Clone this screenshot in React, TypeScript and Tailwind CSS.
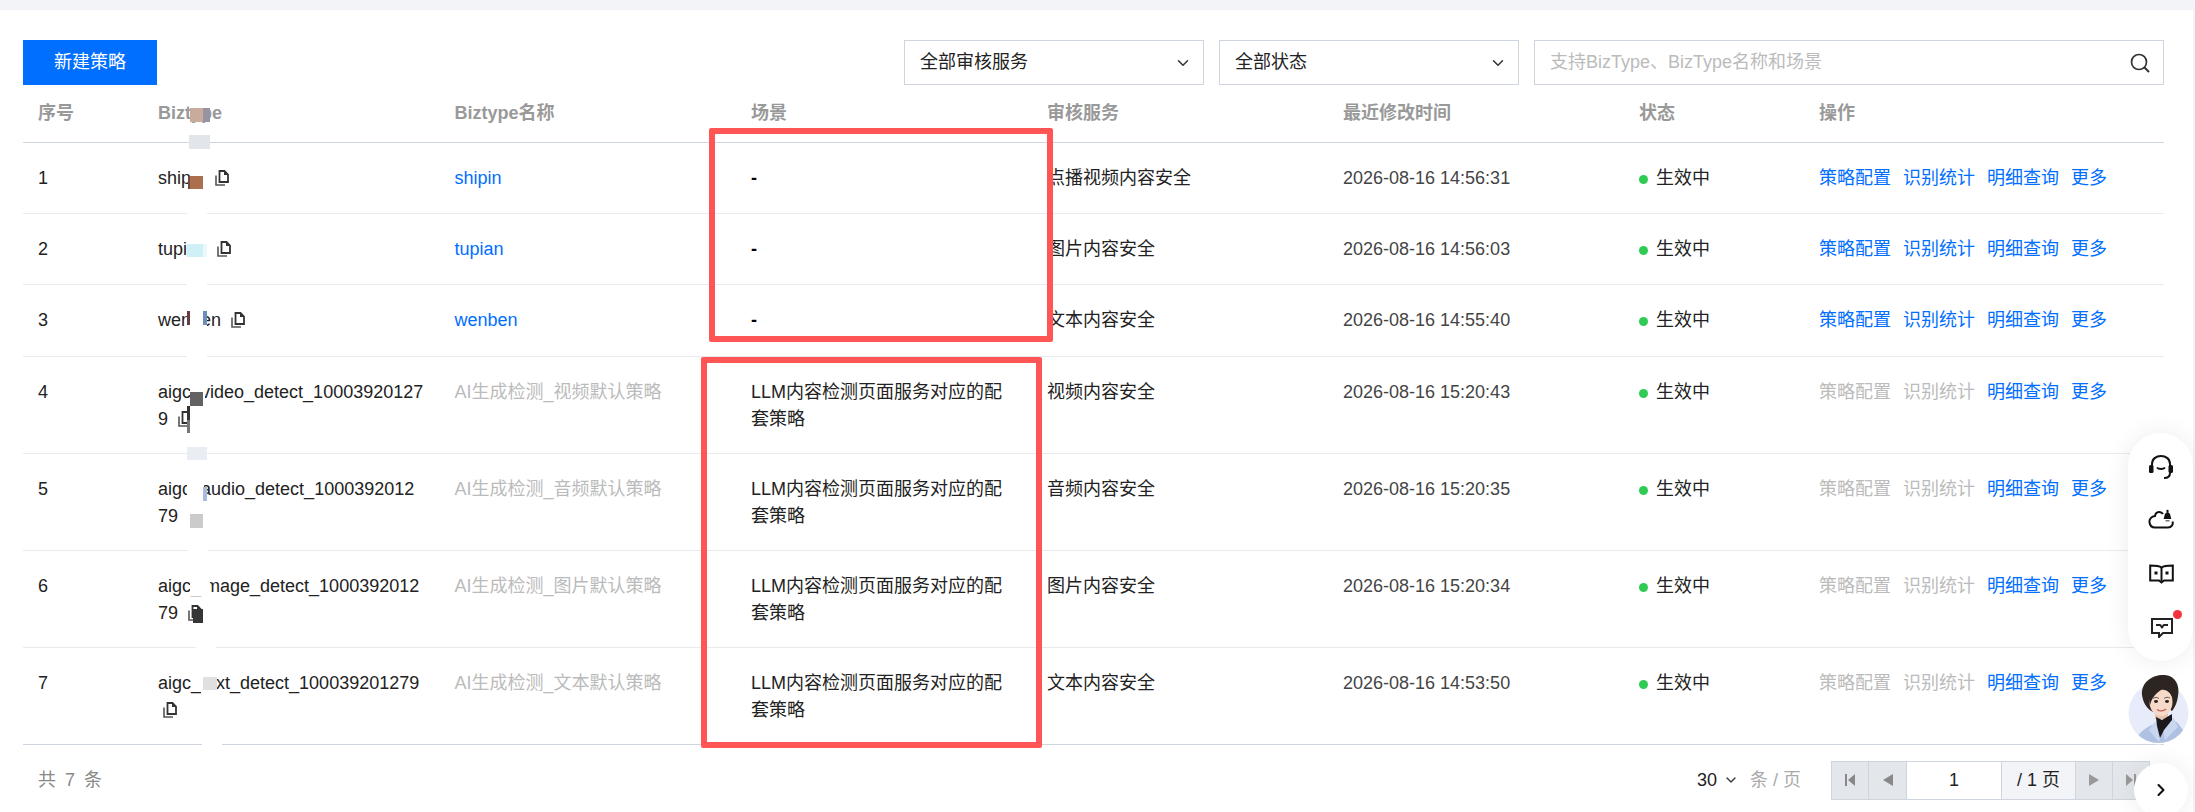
import { ChevronDown, ChevronRight } from "lucide-react"

interface Row {
  id: number
  biztype: string
  name: string
  scene: string
  service: string
  time: string
  locked: boolean
}

const rows: Row[] = [
  { id: 1, biztype: "shipin", name: "shipin", scene: "-", service: "点播视频内容安全", time: "2026-08-16 14:56:31", locked: false },
  { id: 2, biztype: "tupian", name: "tupian", scene: "-", service: "图片内容安全", time: "2026-08-16 14:56:03", locked: false },
  { id: 3, biztype: "wenben", name: "wenben", scene: "-", service: "文本内容安全", time: "2026-08-16 14:55:40", locked: false },
  { id: 4, biztype: "aigc_video_detect_100039201279", name: "AI生成检测_视频默认策略", scene: "LLM内容检测页面服务对应的配套策略", service: "视频内容安全", time: "2026-08-16 15:20:43", locked: true },
  { id: 5, biztype: "aigc_audio_detect_100039201279", name: "AI生成检测_音频默认策略", scene: "LLM内容检测页面服务对应的配套策略", service: "音频内容安全", time: "2026-08-16 15:20:35", locked: true },
  { id: 6, biztype: "aigc_image_detect_100039201279", name: "AI生成检测_图片默认策略", scene: "LLM内容检测页面服务对应的配套策略", service: "图片内容安全", time: "2026-08-16 15:20:34", locked: true },
  { id: 7, biztype: "aigc_text_detect_100039201279", name: "AI生成检测_文本默认策略", scene: "LLM内容检测页面服务对应的配套策略", service: "文本内容安全", time: "2026-08-16 14:53:50", locked: true },
]

const columns = [
  { label: "序号", width: "w-[120px]" },
  { label: "Biztype", width: "w-[296.5px]" },
  { label: "Biztype名称", width: "w-[296.5px]" },
  { label: "场景", width: "w-[296px]" },
  { label: "审核服务", width: "w-[296px]" },
  { label: "最近修改时间", width: "w-[296px]" },
  { label: "状态", width: "w-[180px]" },
  { label: "操作", width: "w-[360px]" },
]

const patches = [
  "left-[190px] top-[108px] w-[13px] h-[14px] bg-[#c9ab9b]",
  "left-[203px] top-[108px] w-[7px] h-[14px] bg-[#9793a0]",
  "left-[189px] top-[135px] w-[21px] h-[14px] bg-[#e2e5ea]",
  "left-[190px] top-[165px] w-[17px] h-[25px] bg-white",
  "left-[188px] top-[176px] w-[2px] h-[13px] bg-[#6f4a42]",
  "left-[190px] top-[176px] w-[13px] h-[13px] bg-[#ab6f4e]",
  "left-[187px] top-[210px] w-[20px] h-[6px] bg-white",
  "left-[187px] top-[235px] w-[20px] h-[26px] bg-white",
  "left-[187px] top-[244px] w-[16px] h-[13px] bg-[#cff0f6]",
  "left-[203px] top-[244px] w-[4px] h-[13px] bg-[#e8f8fb]",
  "left-[187px] top-[281px] w-[20px] h-[6px] bg-white",
  "left-[187px] top-[305px] w-[20px] h-[26px] bg-white",
  "left-[187px] top-[311px] w-[3px] h-[14px] bg-[#663b42]",
  "left-[203px] top-[311px] w-[4px] h-[14px] bg-[#6a8fbb]",
  "left-[187px] top-[353px] w-[20px] h-[6px] bg-white",
  "left-[190px] top-[378px] w-[15px] h-[28px] bg-white",
  "left-[190px] top-[392px] w-[13px] h-[14px] bg-[#626262]",
  "left-[190px] top-[406px] w-[14px] h-[27px] bg-white",
  "left-[187px] top-[406px] w-[3px] h-[14px] bg-[#333333]",
  "left-[187px] top-[420px] w-[3px] h-[13px] bg-[#777777]",
  "left-[187px] top-[447px] w-[20px] h-[13px] bg-[#ebedf4]",
  "left-[187px] top-[475px] w-[17px] h-[28px] bg-white",
  "left-[203px] top-[487px] w-[4px] h-[14px] bg-[#a8bcdc]",
  "left-[183px] top-[505px] w-[24px] h-[30px] bg-white",
  "left-[190px] top-[514px] w-[13px] h-[14px] bg-[#cbcbcb]",
  "left-[188px] top-[547px] w-[20px] h-[6px] bg-white",
  "left-[190px] top-[572px] w-[20px] h-[24px] bg-white",
  "left-[193px] top-[609px] w-[10px] h-[14px] bg-[#363636]",
  "left-[196px] top-[644px] w-[20px] h-[6px] bg-white",
  "left-[201px] top-[668px] w-[16px] h-[26px] bg-white",
  "left-[203px] top-[677px] w-[14px] h-[13px] bg-[#e0e0e0]",
  "left-[202px] top-[741px] w-[20px] h-[6px] bg-white",
]

function CopyIcon() {
  return (
    <svg viewBox="0 0 14 16" className="inline-block ml-[5px] w-[14px] h-[16px] align-[-2px]">
      <path d="M1 5.5V15h9" fill="none" stroke="#555" strokeWidth="1.6" />
      <path d="M4.5 1H9.5L13 4.5V12H4.5Z" fill="#fff" stroke="#333" strokeWidth="1.8" />
      <path d="M9 1V5H13Z" fill="#333" />
    </svg>
  )
}

function HeadsetIcon() {
  return (
    <svg viewBox="0 0 26 26" className="w-[26px] h-[26px]">
      <path d="M4 12V10C4 5 8 2 13 2S22 5 22 10V12" fill="none" stroke="#111" strokeWidth="2" />
      <rect x="1" y="11" width="4.5" height="8" rx="1.5" fill="#111" />
      <rect x="20.5" y="11" width="4.5" height="8" rx="1.5" fill="#111" />
      <path d="M9 13.5C10.5 15.5 15.5 15.5 17 13.5" fill="none" stroke="#111" strokeWidth="2" />
      <path d="M22 19C22 22.5 20 24 16 24" fill="none" stroke="#111" strokeWidth="2" />
    </svg>
  )
}

function CloudBellIcon() {
  return (
    <svg viewBox="0 0 26 20" className="w-[26px] h-[20px]">
      <path d="M15 5C13.5 2.5 8 1.5 7 7C3.5 7.5 1 10 1.5 13.5C2 17 4.5 18.5 7 18.5H20C23.5 18.5 25.5 15.5 24.5 12.5" fill="none" stroke="#111" strokeWidth="2" />
      <path d="M15.5 10C16.5 9 16 3.5 19.5 3C23 3.5 22.5 9 23.5 10Z" fill="#111" />
      <circle cx="19.5" cy="2" r="1.2" fill="#111" />
      <rect x="17.5" y="11" width="4" height="1.5" fill="#777" />
    </svg>
  )
}

function BookIcon() {
  return (
    <svg viewBox="0 0 25 20" className="w-[25px] h-[20px]">
      <path d="M12.5 3.5C10 1.5 5 1.5 1.2 1.5V16.5H10L12.5 18.5L15 16.5H23.8V1.5C20 1.5 15 1.5 12.5 3.5Z" fill="none" stroke="#111" strokeWidth="2" />
      <path d="M12.5 3.5V17" stroke="#111" strokeWidth="2" />
      <rect x="5.5" y="7.5" width="3" height="3" fill="#111" />
      <rect x="16.5" y="7.5" width="3" height="3" fill="#111" />
    </svg>
  )
}

function MessageIcon() {
  return (
    <svg viewBox="0 0 22 20" className="w-[22px] h-[20px]">
      <path d="M1 1H21V15H12L8 19V15H1Z" fill="none" stroke="#222" strokeWidth="2" />
      <path d="M5 7H9C10 7 10.5 9.5 11 9.5S12 7 13 7H17" fill="none" stroke="#222" strokeWidth="2" />
    </svg>
  )
}

function Avatar() {
  return (
    <svg viewBox="0 0 70 80" className="w-[70px] h-[80px]">
      <defs>
        <clipPath id="avatarClip">
          <circle cx="33.5" cy="43" r="30" />
        </clipPath>
      </defs>
      <circle cx="33.5" cy="43" r="31.5" fill="#fff" />
      <circle cx="33.5" cy="43" r="30" fill="#e8ebf9" />
      <g clipPath="url(#avatarClip)">
        <path d="M8 76C12 62 22 57 31 53L47 49C54 53 60 60 64 76Z" fill="#aec1e3" />
        <path d="M30 52L24 60L34 72L38 60Z" fill="#c9d6ef" />
        <path d="M48 47L53 57L40 70L38 60Z" fill="#c9d6ef" />
      </g>
      <path d="M17 25C16 11 29 4 40 5C51 6 55 16 53 26C52 33 50 37 47 41L40 36L28 42C21 38 18 32 17 25Z" fill="#2d2521" />
      <path d="M30 40H43V49H30Z" fill="#eac3ae" />
      <path d="M31 47L37 50L47 44L47 50L39 60L35 68L32 56Z" fill="#1b191b" />
      <ellipse cx="36" cy="32" rx="11.5" ry="14" fill="#f5d9c9" />
      <path d="M24 29C25 19 35 13 44 14C47 18 49 22 48 28C45 22 41 19 36 20C32 23 28 25 25 35Z" fill="#2d2521" />
      <path d="M28 28.5C30 27 32 27 34 28.5" fill="none" stroke="#4a3a34" strokeWidth="0.8" />
      <path d="M39 28.5C41 27 43 27 45 28" fill="none" stroke="#4a3a34" strokeWidth="0.8" />
      <ellipse cx="31" cy="31.5" rx="2" ry="1.4" fill="#2c2220" />
      <ellipse cx="42" cy="31.5" rx="2" ry="1.4" fill="#2c2220" />
      <path d="M32 39.5C34.5 41.5 38.5 41.5 41 39" fill="none" stroke="#c4605c" strokeWidth="1.3" />
    </svg>
  )
}

function Status() {
  return (
    <span className="flex items-center">
      <span className="w-[9px] h-[9px] rounded-full bg-[#2fcb55] mr-[8px] mt-[2px]" />
      生效中
    </span>
  )
}

function Actions({ locked }: { locked: boolean }) {
  const muted = locked ? "text-[#bbbbbb]" : "text-[#006eff]"
  return (
    <div className="flex gap-[12px] text-[#006eff]">
      <a className={muted}>策略配置</a>
      <a className={muted}>识别统计</a>
      <a>明细查询</a>
      <a>更多</a>
    </div>
  )
}

export default function App() {
  return (
    <div className="relative w-full h-[812px] overflow-hidden bg-[#f3f4f8] text-[18px] leading-[27px] text-[#222222] font-['Liberation_Sans','Noto_Sans_CJK_SC',sans-serif]">
      <div className="mr-[2px] mt-[10px] h-[802px] bg-white pl-[23px] pr-[29px] pt-[30px]">
        <div className="flex items-center justify-between h-[45px]">
          <button className="w-[134px] h-[45px] bg-[#006eff] text-white">新建策略</button>
          <div className="flex gap-[15px]">
            <div className="flex items-center justify-between w-[300px] h-[45px] border border-[#cfd5de] pl-[15px] pr-[11px]">
              全部审核服务
              <ChevronDown className="w-[18px] h-[18px] text-[#333]" />
            </div>
            <div className="flex items-center justify-between w-[300px] h-[45px] border border-[#cfd5de] pl-[15px] pr-[11px]">
              全部状态
              <ChevronDown className="w-[18px] h-[18px] text-[#333]" />
            </div>
            <div className="flex items-center w-[630px] h-[45px] border border-[#cfd5de] pl-[15px] pr-[13px]">
              <input
                className="flex-1 outline-none placeholder:text-[#bbbbbb]"
                placeholder="支持BizType、BizType名称和场景"
              />
              <svg viewBox="0 0 20 20" className="w-[20px] h-[20px]">
                <circle cx="9" cy="9" r="7.5" fill="none" stroke="#333" strokeWidth="1.7" />
                <path d="M14.5 14.5L19 19" stroke="#333" strokeWidth="1.9" />
              </svg>
            </div>
          </div>
        </div>

        <table className="table-fixed w-[2140px] border-collapse text-left">
          <thead>
            <tr className="h-[57px] border-b border-[#cfd5de]">
              {columns.map((c) => (
                <th key={c.label} className={`${c.width} px-[15px] font-bold text-[#999999]`}>
                  {c.label}
                </th>
              ))}
            </tr>
          </thead>
          <tbody>
            {rows.map((row, i) => {
              const bottom = i === 2 ? "pb-[22px]" : row.locked ? "pb-[20px]" : "pb-[21px]"
              const cell = `pl-[15px] pr-[15px] pt-[22px] align-top ${bottom}`
              return (
                <tr
                  key={row.id}
                  className={i === 6 ? "border-b border-[#cfd5de]" : "border-b border-[#e7eaef]"}
                >
                  <td className={cell}>{row.id}</td>
                  <td className={`${cell} !pr-[16px] break-all`}>
                    {row.biztype} <CopyIcon />
                  </td>
                  <td className={`${cell} ${row.locked ? "text-[#bbbbbb]" : "text-[#006eff]"}`}>
                    {row.name}
                  </td>
                  <td className={`${cell} ${row.locked ? "" : "font-bold text-black"}`}>{row.scene}</td>
                  <td className={cell}>{row.service}</td>
                  <td className={`${cell} text-[#444444]`}>{row.time}</td>
                  <td className={cell}>
                    <Status />
                  </td>
                  <td className={cell}>
                    <Actions locked={row.locked} />
                  </td>
                </tr>
              )
            })}
          </tbody>
        </table>

        <div className="flex items-center justify-between mt-[16px] pl-[15px] pr-[14px] h-[39px]">
          <div className="flex gap-[9px] text-[#888888]">
            <span>共</span>
            <span>7</span>
            <span>条</span>
          </div>
          <div className="flex items-center">
            <span>30</span>
            <ChevronDown className="w-[16px] h-[16px] ml-[6px] text-[#333]" />
            <span className="ml-[11px] text-[#aaaaaa]">条 / 页</span>
            <div className="flex ml-[30px] h-[39px] border border-[#cfd5de]">
              <div className="flex items-center justify-center w-[36px] bg-[#e3e6eb]">
                <svg viewBox="0 0 10 12" className="w-[10px] h-[12px]">
                  <rect width="2" height="12" fill="#888" />
                  <path d="M10 0V12L3 6Z" fill="#888" />
                </svg>
              </div>
              <div className="flex items-center justify-center w-[38px] bg-[#e3e6eb] border-l border-[#cfd5de]">
                <svg viewBox="0 0 10 12" className="w-[10px] h-[12px]">
                  <path d="M10 0V12L0 6Z" fill="#888" />
                </svg>
              </div>
              <input
                defaultValue="1"
                className="w-[95px] text-center text-[#222] bg-white border-l border-[#cfd5de] outline-none"
              />
              <div className="flex items-center justify-center w-[74px] bg-[#f2f4f8] border-l border-[#cfd5de]">
                / 1 页
              </div>
              <div className="flex items-center justify-center w-[37px] bg-[#e3e6eb] border-l border-[#cfd5de]">
                <svg viewBox="0 0 10 12" className="w-[10px] h-[12px]">
                  <path d="M0 0V12L10 6Z" fill="#999" />
                </svg>
              </div>
              <div className="flex items-center justify-center w-[37px] bg-[#e3e6eb] border-l border-[#cfd5de]">
                <svg viewBox="0 0 10 12" className="w-[10px] h-[12px]">
                  <path d="M0 0V12L7 6Z" fill="#999" />
                  <rect x="8" width="2" height="12" fill="#999" />
                </svg>
              </div>
            </div>
          </div>
        </div>
      </div>

      {patches.map((p) => (
        <div key={p} className={`absolute ${p}`} />
      ))}

      {/* hand-drawn annotation boxes */}
      <div className="absolute left-[709px] top-[128px] w-[344px] h-[214px] border-[6px] border-[#ff5555] rounded-[2px]" />
      <div className="absolute left-[701px] top-[357px] w-[341px] h-[391px] border-[6px] border-[#ff5555] rounded-[2px]" />

      {/* floating help rail */}
      <div className="absolute left-[2128px] top-[433px] w-[65px] h-[228px] rounded-full bg-white shadow-[0_0_24px_rgba(0,0,0,0.08)]">
        <div className="absolute left-[20px] top-[21px]">
          <HeadsetIcon />
        </div>
        <div className="absolute left-[20px] top-[76px]">
          <CloudBellIcon />
        </div>
        <div className="absolute left-[21px] top-[131px]">
          <BookIcon />
        </div>
        <div className="absolute left-[23px] top-[185px]">
          <MessageIcon />
        </div>
        <div className="absolute left-[45px] top-[177px] w-[9px] h-[9px] rounded-full bg-[#f5333f]" />
      </div>
      <div className="absolute left-[2125px] top-[670px]">
        <Avatar />
      </div>
      <div className="absolute left-[2134px] top-[763px] flex items-center justify-center w-[54px] h-[54px] rounded-full bg-white shadow-[0_0_24px_rgba(0,0,0,0.08)]">
        <ChevronRight className="w-[20px] h-[20px] text-[#111]" strokeWidth={2.5} />
      </div>
    </div>
  )
}
